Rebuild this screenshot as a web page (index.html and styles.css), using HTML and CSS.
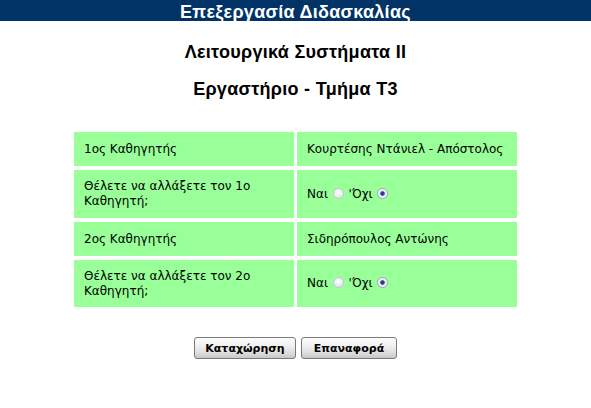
FILE: index.html
```html
<!DOCTYPE html>
<html lang="el">
<head>
<meta charset="utf-8">
<title>Επεξεργασία Διδασκαλίας</title>
<link rel="stylesheet" href="styles.css">
</head>
<body>
<div class="topbar">Επεξεργασία Διδασκαλίας</div>
<h2 class="title t1">Λειτουργικά Συστήματα II</h2>
<h2 class="title t2">Εργαστήριο - Τμήμα Τ3</h2>
<form class="form">
<table class="grid">
  <tr class="r1">
    <td>1ος Καθηγητής</td>
    <td>Κουρτέσης Ντάνιελ - Απόστολος</td>
  </tr>
  <tr class="r2">
    <td>Θέλετε να αλλάξετε τον 1ο Καθηγητή;</td>
    <td>Ναι <input type="radio" name="a" class="radio"> 'Όχι <input type="radio" name="a" class="radio" checked></td>
  </tr>
  <tr class="r1">
    <td>2ος Καθηγητής</td>
    <td>Σιδηρόπουλος Αντώνης</td>
  </tr>
  <tr class="r2 last">
    <td>Θέλετε να αλλάξετε τον 2ο Καθηγητή;</td>
    <td>Ναι <input type="radio" name="b" class="radio"> 'Όχι <input type="radio" name="b" class="radio" checked></td>
  </tr>
</table>
<div class="buttons">
  <button type="button" class="btn b1">Καταχώρηση</button>
  <button type="button" class="btn b2">Επαναφορά</button>
</div>
</form>
</body>
</html>
```
FILE: styles.css
```css
html, body {
  margin: 0;
  padding: 0;
  background: #ffffff;
}
body {
  font-family: "DejaVu Sans", Verdana, sans-serif;
  color: #000;
}
.topbar {
  background: #013366;
  color: #ffffff;
  height: 21px;
  line-height: 25px;
  overflow: hidden;
  text-align: center;
  font-family: "Liberation Sans", Arial, sans-serif;
  font-weight: bold;
  font-size: 18px;
  letter-spacing: 0.3px;
}
.title {
  font-family: "Liberation Sans", Arial, sans-serif;
  font-weight: bold;
  font-size: 18px;
  letter-spacing: 0.3px;
  text-align: center;
  margin: 0;
  line-height: 22px;
}
.t1 {
  margin-top: 20px;
}
.t2 {
  margin-top: 15px;
}
.form {
  margin: 0;
  padding-top: 28px;
}
.grid {
  width: 449px;
  margin: 0 auto;
  border-collapse: separate;
  border-spacing: 3px 4px;
  font-size: 12px;
}
.grid td {
  background: #99ff99;
  width: 50%;
  padding: 0 10px;
  vertical-align: middle;
  line-height: 15px;
}
.r1 td {
  height: 34px;
}
.r2 td {
  height: 48px;
}
.last td {
  height: 47px;
}
.radio {
  appearance: none;
  -webkit-appearance: none;
  width: 11px;
  height: 11px;
  margin: 0 1px;
  border-radius: 50%;
  border: 1px solid #c4c8d4;
  background: radial-gradient(circle at 50% 40%, #ffffff 0%, #e8eaf0 60%, #d4d8e2 100%);
  vertical-align: -1px;
  box-sizing: border-box;
}
.radio:checked {
  background: radial-gradient(circle at 50% 50%, #2a2f7a 0%, #3b4096 28%, #dde0ee 42%, #ffffff 70%, #e0e3ec 100%);
  border-color: #9aa0c0;
}
.buttons {
  display: flex;
  justify-content: center;
  gap: 5px;
  margin-top: 26px;
}
.btn {
  font-family: "DejaVu Sans", Verdana, sans-serif;
  font-weight: bold;
  font-size: 11px;
  height: 22px;
  padding: 0;
  border: 1px solid #7a7a7a;
  border-radius: 3px;
  background: linear-gradient(to bottom, #fdfdfd 0%, #eeeeee 45%, #dcdcdc 75%, #c8c8c8 100%);
  color: #000;
}
.b1 {
  width: 102px;
}
.b2 {
  width: 96px;
}
```
